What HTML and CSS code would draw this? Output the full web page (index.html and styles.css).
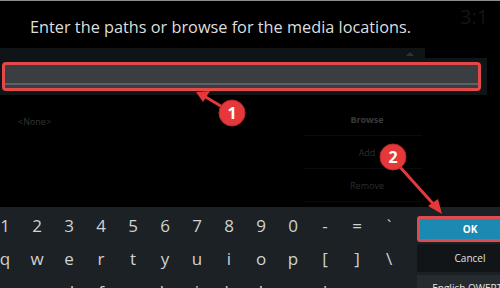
FILE: index.html
```html
<!DOCTYPE html>
<html>
<head>
<meta charset="utf-8">
<link rel="stylesheet" href="styles.css">
</head>
<body>
<div class="screen">
  <header class="head">
    <h1 class="title">Enter the paths or browse for the media locations.</h1>
    <span class="clock">3:1</span>
  </header>
  <div class="band">
    <div class="band-top"><span class="caret"></span></div>
    <div class="band-main">
      <div class="input"><div class="input-fill"></div></div>
    </div>
  </div>
  <div class="middle">
    <div class="list"><span class="none">&lt;None&gt;</span></div>
    <div class="actions">
      <div class="act act-browse">Browse</div>
      <div class="act">Add</div>
      <div class="act">Remove</div>
    </div>
  </div>
  <div class="kb">
    <div class="keys">
      <div class="row"><span>1</span><span>2</span><span>3</span><span>4</span><span>5</span><span>6</span><span>7</span><span>8</span><span>9</span><span>0</span><span>-</span><span>=</span><span>`</span></div>
      <div class="row"><span>q</span><span>w</span><span>e</span><span>r</span><span>t</span><span>y</span><span>u</span><span>i</span><span>o</span><span>p</span><span>[</span><span>]</span><span>\</span></div>
      <div class="row"><span>a</span><span>s</span><span>d</span><span>f</span><span>g</span><span>h</span><span>j</span><span>k</span><span>l</span><span>;</span><span>'</span><span></span><span></span></div>
    </div>
    <div class="side">
      <div class="btn btn-ok">OK</div>
      <div class="btn btn-cancel">Cancel</div>
      <div class="btn btn-lang">English QWERTY</div>
    </div>
  </div>
  <svg class="annot" width="500" height="288" viewBox="0 0 500 288">
    <g stroke="#e5383b" stroke-width="3" stroke-linecap="round" fill="none">
      <line x1="224" y1="107" x2="204" y2="95"/>
      <line x1="400" y1="166" x2="436" y2="206"/>
    </g>
    <g fill="#e5383b">
      <polygon points="196,91 210,90 203,101"/>
      <polygon points="442,213 428,205 438,198"/>
      <circle cx="232" cy="112" r="13" stroke="#b52a2d" stroke-width="1"/>
      <circle cx="393" cy="156" r="13" stroke="#b52a2d" stroke-width="1"/>
    </g>
    <g fill="#fff" font-family="'Open Sans', sans-serif" font-weight="700" font-size="16" text-anchor="middle">
      <text x="232" y="118">1</text>
      <text x="393" y="162">2</text>
    </g>
  </svg>
</div>
</body>
</html>
```
FILE: styles.css
```css
* { box-sizing: border-box; margin: 0; padding: 0; }
html, body { width: 500px; height: 288px; overflow: hidden; background: #000; }
body { font-family: "Open Sans", sans-serif; }
.screen { position: relative; width: 500px; height: 288px; overflow: hidden; border-top: 1px solid #8c8c8c; display: flex; flex-direction: column; }
.head, .band, .middle { flex-shrink: 0; }
.head { height: 47px; display: flex; align-items: flex-start; }
.title { font-weight: 400; font-size: 16.3px; line-height: 20px; color: #dedede; padding: 16px 0 0 30px; white-space: nowrap; }
.clock { margin-left: auto; width: 40px; font-size: 20px; line-height: 24px; color: #141414; padding-top: 4px; white-space: nowrap; overflow: hidden; }
.band { display: flex; flex-direction: column; }
.band-top { width: 425px; height: 10px; background: #0f1517; position: relative; }
.caret { position: absolute; left: 406px; top: 4px; width: 0; height: 0; border-left: 4px solid transparent; border-right: 4px solid transparent; border-bottom: 4px solid #2d3335; }
.band-main { width: 487px; height: 37px; background: #0f1517; padding: 4px 0 0 2px; }
.input { width: 479px; height: 29px; border: 3px solid #e34949; border-radius: 4px; background: #3b3e40; }
.input-fill { height: 20px; border-bottom: 2px solid #5f6264; }
.middle { height: 112px; display: flex; }
.list { width: 300px; padding: 13px 0 0 18px; }
.none { font-size: 9px; color: #363636; }
.actions { margin-left: 4px; width: 118px; display: flex; flex-direction: column; padding-top: 8px; }
.act { height: 33px; display: flex; align-items: center; justify-content: center; font-size: 9px; color: #2e2e2e; border-bottom: 1px solid #0b0b0b; padding-left: 8px; }
.act-browse { font-weight: 700; color: #3a3a3a; }
.kb { flex: 1; min-height: 0; display: flex; background: #1b2124; overflow: hidden; }
.keys { flex-shrink: 0; margin-left: -11px; width: 428px; padding-top: 2px; }
.row { display: flex; height: 33px; align-items: center; }
.row span { width: 32px; text-align: center; font-size: 17px; color: #d0d2d3; line-height: 33px; }
.side { flex-shrink: 0; width: 110px; display: flex; flex-direction: column; padding-top: 9px; }
.btn { flex-shrink: 0; height: 26px; display: flex; align-items: center; justify-content: center; font-size: 10px; color: #e2e2e2; width: 106px; }
.btn-ok { background: #1a8ab3; border: 3px solid #dc4c50; border-radius: 3px; font-weight: 700; color: #fff; margin-bottom: 2px; }
.btn-cancel { background: #111517; height: 28px; margin-bottom: 3px; }
.btn-lang { background: #252b2e; height: 26px; }
.annot { position: absolute; left: 0; top: 0; }
```
